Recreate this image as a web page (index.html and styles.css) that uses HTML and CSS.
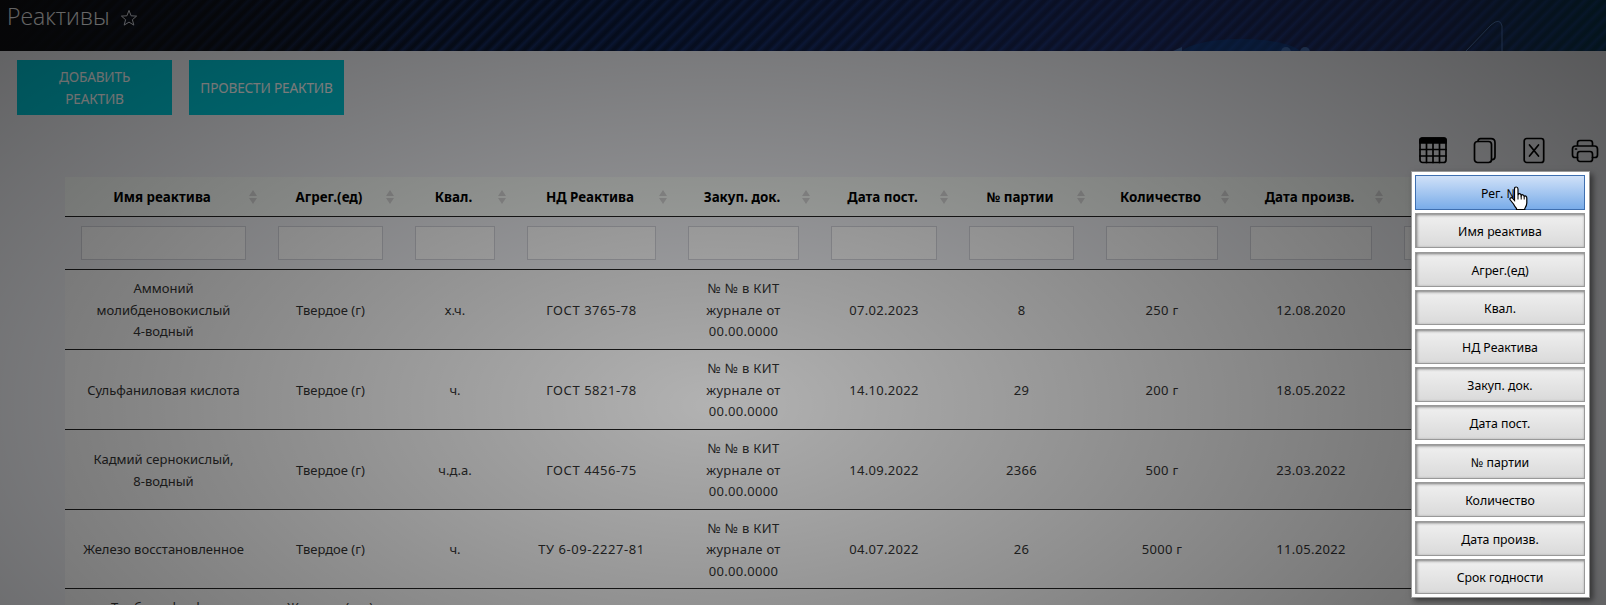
FILE: index.html
```html
<!DOCTYPE html>
<html lang="ru">
<head>
<meta charset="utf-8">
<title>Реактивы</title>
<link rel="stylesheet" href="styles.css">
</head>
<body>
<header class="hero">
  <h1 class="title">Реактивы</h1>
  <svg class="star" width="18" height="18" viewBox="0 0 18 18"><path d="M9 1.400l2.100 5.400 5.500.3-4.200 3.600 1.400 5.400L9 13.100l-4.800 3 1.400-5.400L1.400 7.100l5.500-.3z"/></svg>
  <svg class="hero-art" width="360" height="51" viewBox="0 0 360 51"><ellipse cx="68" cy="56" rx="62" ry="17" fill="#0c4c9c" opacity=".45"/><path d="M0 51l9-4v4z" fill="#4a76b8" opacity=".8"/><circle cx="113" cy="52" r="5" fill="#4a76b8" opacity=".8"/><circle cx="132" cy="52" r="5" fill="#4a76b8" opacity=".8"/><path d="M293 51l25-26q9-8 11 1v25" fill="none" stroke="#5c8ad0" opacity=".85"/></svg>
</header>
<main class="page">
  <div class="actions">
    <button class="action">ДОБАВИТЬ<br>РЕАКТИВ</button>
    <button class="action">ПРОВЕСТИ РЕАКТИВ</button>
  </div>
  <div class="tools">
    <svg width="28" height="27" viewBox="0 0 28 27"><rect x="1" y="1" width="26" height="24.500" rx="2.500"/><path class="solid" d="M1 6V3q0-2 2-2h22q2 0 2 2v3z"/><path d="M1 12.500h26M1 19h26M7.500 6v19.500M14 6v19.500M20.500 6v19.500"/></svg>
    <svg width="24" height="27" viewBox="0 0 24 27"><rect x="1.500" y="4.500" width="17" height="21" rx="3"/><path d="M5 4.300Q5 1.700 7.500 1.700H18q4 0 4 4v14q0 2.800-3 3"/></svg>
    <svg width="22" height="27" viewBox="0 0 22 27"><rect x="1.200" y="1.500" width="19.500" height="24" rx="2.500"/><path d="M6.500 8l9 11M15.500 8l-9 11"/></svg>
    <svg width="28" height="27" viewBox="0 0 28 27"><path d="M6.500 9V6q0-2.500 2.500-2.500h10Q21.500 3.500 21.500 6v3M6.500 20.500H4q-2.500 0-2.500-2.500v-6Q1.500 9 4.500 9h19q3 0 3 3v6q0 2.500-2.500 2.500h-2.500"/><rect x="6.500" y="14.500" width="15" height="10" rx="2.500"/><path d="M4.500 12h1"/></svg>
  </div>
  <table class="grid">
    <colgroup><col class="w197"><col class="w137"><col class="w112"><col class="w161"><col class="w143"><col class="w138"><col class="w137"><col class="w144"><col class="w154"><col></colgroup>
    <thead>
      <tr class="heads"><th>Имя реактива<i></i></th><th>Агрег.(ед)<i></i></th><th>Квал.<i></i></th><th>НД Реактива<i></i></th><th>Закуп. док.<i></i></th><th>Дата пост.<i></i></th><th>№ партии<i></i></th><th>Количество<i></i></th><th>Дата произв.<i></i></th><th></th></tr>
      <tr class="filters"><td><input></td><td><input></td><td><input></td><td><input></td><td><input></td><td><input></td><td><input></td><td><input></td><td><input></td><td><input></td></tr>
    </thead>
    <tbody>
      <tr><td>Аммоний<br>молибденовокислый<br>4-водный</td><td>Твердое (г)</td><td>х.ч.</td><td class="code">ГОСТ 3765-78</td><td class="num">№ № в КИТ<br>журнале от<br>00.00.0000</td><td class="num">07.02.2023</td><td class="num">8</td><td class="num">250 г</td><td class="num">12.08.2020</td><td></td></tr>
      <tr><td>Сульфаниловая кислота</td><td>Твердое (г)</td><td>ч.</td><td class="code">ГОСТ 5821-78</td><td class="num">№ № в КИТ<br>журнале от<br>00.00.0000</td><td class="num">14.10.2022</td><td class="num">29</td><td class="num">200 г</td><td class="num">18.05.2022</td><td></td></tr>
      <tr><td>Кадмий сернокислый,<br>8-водный</td><td>Твердое (г)</td><td>ч.д.а.</td><td class="code">ГОСТ 4456-75</td><td class="num">№ № в КИТ<br>журнале от<br>00.00.0000</td><td class="num">14.09.2022</td><td class="num">2366</td><td class="num">500 г</td><td class="num">23.03.2022</td><td></td></tr>
      <tr class="short"><td>Железо восстановленное</td><td>Твердое (г)</td><td>ч.</td><td class="code">ТУ 6-09-2227-81</td><td class="num">№ № в КИТ<br>журнале от<br>00.00.0000</td><td class="num">04.07.2022</td><td class="num">26</td><td class="num">5000 г</td><td class="num">11.05.2022</td><td></td></tr>
      <tr class="cut"><td>Трибутилфосфат</td><td class="wide">Жидкое (мл)</td><td></td><td></td><td></td><td></td><td></td><td></td><td></td><td></td></tr>
    </tbody>
  </table>
</main>
<div class="backdrop"></div>
<div class="menu">
  <button class="item hover">Рег. №</button>
  <button class="item">Имя реактива</button>
  <button class="item">Агрег.(ед)</button>
  <button class="item">Квал.</button>
  <button class="item">НД Реактива</button>
  <button class="item">Закуп. док.</button>
  <button class="item">Дата пост.</button>
  <button class="item">№ партии</button>
  <button class="item">Количество</button>
  <button class="item">Дата произв.</button>
  <button class="item">Срок годности</button>
</div>
<svg class="cursor" width="19" height="25" viewBox="0 0 19 25"><path d="M5.500 14.500V3q0-2 1.700-2T9 3v6q.4-1.500 1.700-1.300T12.200 9.500q.5-1 1.600-.7t1.400 1.500q.6-.7 1.600-.2t1 2V17q0 2.500-2 5.500v1H7.500v-1q-1.500-1.500-3-4.500L1.300 14q-.8-1.300.2-2t2.200.4z" fill="#fff" stroke="#000" stroke-width="1.200"/><path d="M9 9v4.500M12.200 9.500v4M15.200 10.500v3" stroke="#000"/></svg>
</body>
</html>
```
FILE: styles.css
```css
* { box-sizing: border-box; }

body {
  margin: 0;
  width: 1606px;
  height: 605px;
  overflow: hidden;
  position: relative;
  background: #f3f4f8;
  font-family: "Noto Sans", sans-serif;
}

.hero {
  position: relative;
  display: flex;
  height: 51px;
  padding-left: 7px;
  background:
    repeating-linear-gradient(135deg, rgba(50, 85, 200, 0) 0 2px, rgba(40, 85, 200, .3) 5px, rgba(50, 85, 200, 0) 9px),
    linear-gradient(90deg, #101114 0%, #0c111c 12%, #0b1a3c 40%, #1a2555 72%, #1c2854 90%, #0a3850 100%);
}
.hero::before {
  content: "";
  position: absolute;
  inset: 0;
  background: linear-gradient(90deg, #0f1013 0, rgba(12, 16, 24, 0) 420px);
}
.title {
  position: relative;
  margin: 0;
  color: #fff;
  font: 300 23px/32px "Open Sans", "Noto Sans", sans-serif;
}
.star { position: relative; margin: 9px 0 0 10px; fill: none; stroke: #dde0ea; }
.hero-art { position: absolute; top: 0; left: 1173px; }

.page { display: flex; flex-direction: column; }
.actions { display: flex; gap: 17px; padding: 9px 17px 0; }
.action {
  width: 155px;
  height: 55px;
  padding: 0;
  border: 0;
  background: #00c8d8;
  color: #fff;
  font: 13.7px/22px "Noto Sans", sans-serif;
  letter-spacing: -.2px;
}

.tools { display: flex; align-self: flex-end; margin: 22px 7px 13px 0; gap: 26px; }
.tools svg { fill: none; stroke: #000; stroke-width: 1.7; stroke-linecap: round; stroke-linejoin: round; }
.tools .solid { fill: #000; }

.grid {
  width: 1476px;
  margin-left: 65px;
  table-layout: fixed;
  border-collapse: separate;
  border-spacing: 0;
  color: #333;
  font-size: 13px;
  line-height: 21.5px;
  text-align: center;
}
.w197 { width: 197px; }
.w137 { width: 137px; }
.w112 { width: 112px; }
.w161 { width: 161px; }
.w143 { width: 143px; }
.w138 { width: 138px; }
.w144 { width: 144px; }
.w154 { width: 154px; }
.grid th, .grid td { padding: 2px 0 0; border-bottom: 1px solid #222; vertical-align: middle; }
.grid .code { letter-spacing: .55px; }
.grid .num { letter-spacing: .3px; }
.grid .wide { letter-spacing: .8px; }
.heads { height: 40px; background: #fbfffb; }
.grid .heads th { position: relative; color: #000; font-size: 13.4px; padding-right: 3px; }
.heads i { position: absolute; right: 5px; top: 13px; width: 8px; height: 14px; }
.heads i::before, .heads i::after {
  content: "";
  position: absolute;
  left: 0;
  border: 4px solid transparent;
}
.heads i::before { top: -4px; border-bottom: 6px solid #d9d9d9; }
.heads i::after { bottom: -4px; border-top: 6px solid #d9d9d9; }
.filters { height: 53px; }
.grid .filters td { padding: 0 16px; }
.filters input {
  display: block;
  width: 100%;
  height: 34px;
  border: 1px solid #d4d5dc;
  background: #fff;
}
tbody tr { height: 80px; background: #fff; }
tbody tr:nth-child(odd) { background: #f9f9f9; }
tbody .short { height: 79px; }
.grid .cut td { padding-top: 8px; vertical-align: top; }

.backdrop {
  position: absolute;
  inset: 0;
  background: radial-gradient(ellipse 1320px 710px at 715px 405px, rgba(0, 0, 0, .3), rgba(0, 0, 0, .7));
}

.menu {
  position: absolute;
  left: 1411px;
  top: 171px;
  width: 179px;
  height: 427px;
  padding: 3px 4px 3px 3px;
  display: flex;
  flex-direction: column;
  justify-content: space-between;
  background: #fff;
  border: 1px solid #999;
  box-shadow: 3px 3px 6px rgba(0, 0, 0, .5);
}
.item {
  height: 35px;
  padding: 2px 0 0;
  border: 1px solid #999;
  background: linear-gradient(#f0f0f0, #dadada);
  box-shadow: inset 1px 1px 3px #777;
  color: #000;
  font: 12.3px/31px "Noto Sans", sans-serif;
}
.item.hover {
  border-color: #3e6fb0;
  background: linear-gradient(#d0e1f8, #79ace9);
  box-shadow: none;
}
.cursor { position: absolute; left: 1509px; top: 186px; }
```
